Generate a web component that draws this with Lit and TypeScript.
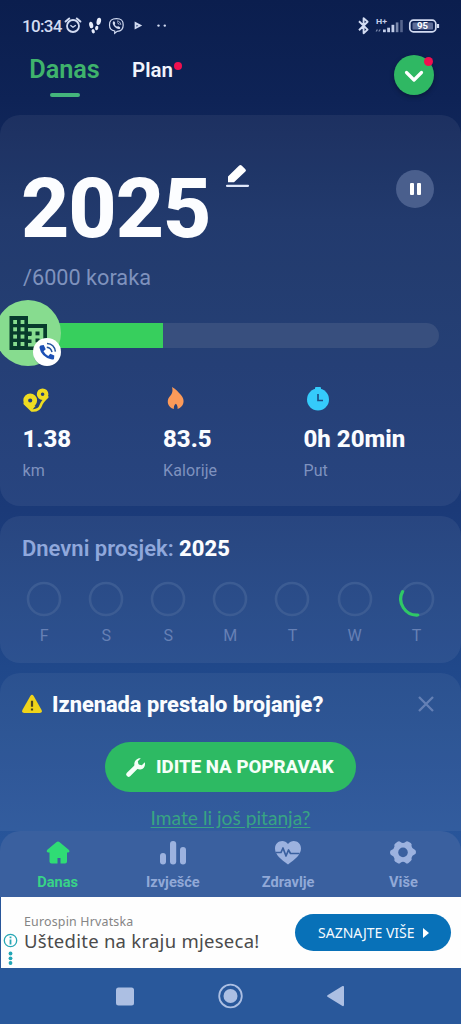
import { LitElement, html, css, svg } from "lit";
import { customElement } from "lit/decorators.js";

@customElement("status-bar")
class StatusBar extends LitElement {
  static styles = css`
    :host { display: block; height: 52px; color: #d3dcf2; }
    .row { display: flex; align-items: center; height: 52px; padding: 0 22px; }
    .time { font-size: 17px; line-height: 52px; width: 42px; white-space: nowrap; font-weight: 500; letter-spacing: -0.700px; }
    .left { width: 110px; height: 20px; }
    .right { width: 84px; height: 20px; margin-left: auto; margin-right: -2px; }
    svg { display: block; }
    .pct { font: 700 9px Roboto, sans-serif; }
    .net { font: 700 7px Roboto, sans-serif; }
  `;
  render() {
    return html`<div class="row">
      <div class="time">10:34</div>
      <svg class="left" viewBox="64 16 110 20" fill="none" stroke="#d3dcf2">
        <circle cx="73" cy="26" r="6" stroke-width="1.8" />
        <path d="M65.6 21.5l3.6-3M80.4 21.5l-3.6-3" stroke-width="2" stroke-linecap="round" />
        <path d="M70.4 25.2l2.6 2 2.8-2" stroke-width="1.4" />
        <g fill="#e8edfb" stroke="none">
          <ellipse cx="91.2" cy="25" rx="2" ry="3.4" transform="rotate(-12 91.2 25)" />
          <ellipse cx="93.2" cy="31.2" rx="1.6" ry="2.2" transform="rotate(-20 93.2 31.2)" />
          <ellipse cx="98.8" cy="21.4" rx="2.2" ry="3.7" transform="rotate(12 98.8 21.4)" />
          <ellipse cx="96.7" cy="28" rx="1.6" ry="2.2" transform="rotate(15 96.7 28)" />
        </g>
        <path d="M116.500 18.700c5 0 6.700 1.600 6.700 6.300 0 4.500-1.700 6.200-6 6.300l-2.500 2v-2.300c-3.600-.6-5.200-2.200-5.200-6 0-4.700 2-6.300 7-6.300z" stroke-width="1.2" />
        <path d="M113.500 21.300c-1.600 1.200-.4 4 1.400 5.800 1.800 1.700 4.400 2.800 5.300 1.100.5-1-1.900-2.600-2.600-1.800-.8.800-3.400-1.700-2.600-2.500.8-.7-.7-3.100-1.500-2.600z" fill="#d3dcf2" stroke="none" />
        <path d="M117 21c2.300.2 3.600 1.500 3.800 3.800M117.200 22.800c1.200.1 1.800.8 1.900 1.900" stroke-width=".9" />
        <path d="M134.600 21.600l7.600 4-7.600 4z" fill="#d3dcf2" stroke="none" />
        <path d="M136.400 24.700l2 1-2 1z" fill="#33457a" stroke="none" />
        <circle cx="158.500" cy="25.600" r="1.200" fill="#d3dcf2" stroke="none" />
        <circle cx="164.800" cy="25.600" r="1.200" fill="#d3dcf2" stroke="none" />
      </svg>
      <svg class="right" viewBox="355 16 84 20" fill="none" stroke="#d3dcf2">
        <path d="M357 21.200l8.600 8.400-4 3.600v-15l4 3.600-8.600 8.400" stroke-width="1.900" stroke-linejoin="round" />
        <g fill="#c3cee9" stroke="none">
          <text class="net" x="374" y="24" textLength="11" lengthAdjust="spacingAndGlyphs">H+</text>
          <path d="M374.500 29.500h1.500l-1 2h-1.400zM377.200 29.500h1.500l-1 2h-1.400z" opacity=".6" />
          <rect x="381" y="29.500" width="2.800" height="2.700" /><rect x="385.200" y="27.700" width="2.800" height="4.500" />
          <rect x="389.500" y="24.800" width="2.800" height="7.400" />
          <rect x="393.800" y="22.400" width="2.600" height="9.800" opacity=".6" />
          <rect x="398.200" y="20" width="2.600" height="12.200" opacity=".4" />
        </g>
        <rect x="407.800" y="20.200" width="26" height="11.600" rx="3.600" stroke-width="1.700" />
        <rect x="410.500" y="22.600" width="20.500" height="7" rx="1.200" fill="#5d6c97" stroke="none" />
        <path d="M436 24v4" stroke-width="2.200" />
        <text class="pct" x="415" y="29.300" fill="#fff" stroke="none" textLength="11" lengthAdjust="spacingAndGlyphs">95</text>
      </svg>
    </div>`;
  }
}

@customElement("top-tabs")
class TopTabs extends LitElement {
  static styles = css`
    :host { display: block; height: 63px; }
    .row { display: flex; align-items: flex-start; padding: 0 26px 0 29px; }
    .today { display: flex; flex-direction: column; align-items: center; width: 71px; color: #3fb36c; font-size: 25.300px; font-weight: 600; line-height: 36px; letter-spacing: -0.100px; }
    .bar { width: 30px; height: 4px; border-radius: 2px; background: #44b57c; margin-top: 5px; }
    .plan { margin-left: 32px; color: #f1f4fc; font-size: 20.500px; font-weight: 600; line-height: 36px; position: relative; }
    .dot { position: absolute; width: 8px; height: 8px; border-radius: 50%; background: #f0104f; left: 42px; top: 10px; }
    .round { margin-left: auto; margin-top: 3px; width: 40px; height: 40px; border-radius: 50%; background: #2fb863; position: relative; box-shadow: 0 2px 5px rgba(0, 0, 0, 0.300); margin-right: 1px; }
    .round svg { display: block; }
    .round .dot { left: 30px; top: 2px; width: 9px; height: 9px; }
  `;
  render() {
    return html`<div class="row">
      <div class="today"><span>Danas</span><div class="bar"></div></div>
      <div class="plan">Plan<span class="dot"></span></div>
      <div class="round">
        <svg width="40" height="40" viewBox="0 0 40 40"><path d="M12.500 17.500l7.500 7.500 7.500-7.500" fill="none" stroke="#fff" stroke-width="3.200" stroke-linecap="round" stroke-linejoin="round" /></svg>
        <span class="dot"></span>
      </div>
    </div>`;
  }
}

@customElement("steps-card")
class StepsCard extends LitElement {
  static styles = css`
    :host { display: block; height: 391px; border-radius: 20px; background: rgba(255, 255, 255, 0.060); }
    .inner { padding: 48px 0 0 23px; }
    .head { display: flex; height: 90px; }
    .steps { font-size: 84px; font-weight: 800; line-height: 92px; color: #fcfdff; margin-left: -2px; width: 193px; letter-spacing: -1.100px; }
    .edit { margin: 1px 0 0 12px; height: 25px; }
    .pause { margin: 7px 27px 0 auto; width: 38px; height: 38px; border-radius: 50%; background: #4a5f8d; display: flex; align-items: center; justify-content: center; gap: 3px; }
    .pause i { width: 4px; height: 12px; background: #fff; border-radius: 1px; }
    .goal { margin-top: 13px; font-size: 21.700px; line-height: 24px; color: #7f92bd; }
    .track { margin: 33px 22px 0 0; height: 25px; border-radius: 0 13px 13px 0; background: #384f7e; position: relative; }
    .fill { height: 25px; background: #37cf5d; }
    .chat { position: absolute; left: -28px; top: -23px; width: 72px; height: 70px; }
    .stats { display: grid; grid-template-columns: 140.500px 140.500px 1fr; margin-top: 37px; }
    .stats svg { display: block; height: 28px; }
    .val { margin-top: 12px; font-size: 24px; line-height: 28px; font-weight: 800; color: #fbfcff; white-space: nowrap; }
    .lab { margin-top: 8px; font-size: 16px; line-height: 20px; color: #7f92bf; letter-spacing: 0.100px; }
    .val, .lab { margin-left: -0.500px; }
  `;
  render() {
    const road = svg`<path d="M1.800 18.500L9 25.500q7 .5 9-5.500.8-3 6.200-8" fill="none" stroke="#efdc21" stroke-width="2.600" stroke-linecap="round" stroke-linejoin="round"/><g fill="none" stroke="#efdc21"><circle cx="7.200" cy="15.500" r="4.500" stroke-width="4.800"/><circle cx="19.600" cy="9.200" r="3.800" stroke-width="4"/></g><path d="M4 20.500l5.500 4 3-3.500z" fill="#efdc21"/>`;
    const flame = svg`<path d="M8 2c4 2 6.500 5.300 9 8 4.500 5.300 3 11.600-3.400 14 .2-2-.2-3.800-1.800-5.200-1.700 1.400-2.100 3.100-1.900 5.300-6.200-1.600-7.600-8-4.600-12 2.500-3 4-5.200 2.700-10.100z" fill="#fc9a59"/>`;
    const clock = svg`<circle cx="14" cy="14.500" r="11" fill="#35cbfb"/><rect x="11" y="2" width="6" height="3" rx="1" fill="#35cbfb"/><path d="M14 9v6.500h5" stroke="#1c4f86" stroke-width="1.700" fill="none"/>`;
    const data = [[road, "1.38", "km"], [flame, "83.5", "Kalorije"], [clock, "0h 20min", "Put"]];
    return html`<div class="inner">
      <div class="head">
        <div class="steps">2025</div>
        <svg class="edit" width="24" height="25" viewBox="0 0 24 25"><path d="M2 12.500L13.200 1.500q1.200-1.200 2.400 0l3.800 3.700q1.200 1.200 0 2.400L8 18.200H2z" fill="#fff" /><path d="M1 21.800h21" stroke="#dfe7fa" stroke-width="2.200" stroke-linecap="round" /></svg>
        <div class="pause"><i></i><i></i></div>
      </div>
      <div class="goal">/6000 koraka</div>
      <div class="track">
        <div class="fill" style="width:${(2025 / 6000) * 100}%"></div>
        <svg class="chat" viewBox="-5 300 72 70">
          <circle cx="28" cy="333" r="33" fill="#87dc8f" />
          <path d="M9.500 316H28v8h19v26H9.500z" fill="#073b2c" />
          <g fill="#87dc8f">
            ${[320, 327.3, 334.6, 342].map((y) => svg`<rect x="13.200" y=${y} width="3.800" height="4"/><rect x="20.600" y=${y} width="3.800" height="4"/>`)}
            <path d="M31.500 328h11.800v18.500H28v-3.500h3.500v-3.500H28V336h3.500v-3.500H28V328z" />
          </g>
          <g fill="#073b2c"><rect x="28" y="331.500" width="3.600" height="3.400" /><rect x="35.500" y="331.500" width="4" height="3.800" /><rect x="35.500" y="338.500" width="4" height="3.800" /></g>
          <circle cx="47.500" cy="353.500" r="14" fill="#203a66" opacity=".25" />
          <circle cx="47" cy="352" r="14" fill="#fff" />
          <path d="M40.500 345.500l3.200-.5 2 4.300-2.200 2q1.800 3.400 4.800 4.700l2-2.300 4 1.800-.3 3.400q-1 .8-3 .4-9.800-2.500-11.500-11.500-.2-1.500 1-2.300z" fill="#1d50b5" />
          <path d="M47 343.500c4.800.2 7.800 3.400 8.400 8.200M46.800 347.200c3 .4 4.700 2.200 5.200 5" stroke="#24549f" stroke-width="1.500" fill="none" />
        </svg>
      </div>
      <div class="stats">
        ${data.map((d) => html`<div><svg width="28" height="28" viewBox="0 0 28 28">${d[0]}</svg><div class="val">${d[1]}</div><div class="lab">${d[2]}</div></div>`)}
      </div>
    </div>`;
  }
}

@customElement("average-card")
class AverageCard extends LitElement {
  static styles = css`
    :host { display: block; height: 147px; border-radius: 20px; background: rgba(255, 255, 255, 0.060); margin-top: 10px; }
    .title { padding: 20px 0 0 22px; font-size: 22px; line-height: 26px; font-weight: 600; color: #90a8dc; }
    .title b { color: #fbfcff; font-weight: 800; }
    .days { display: grid; grid-template-columns: repeat(7, 62.100px); padding: 19px 0 0 13px; }
    .day { display: flex; flex-direction: column; align-items: center; font-size: 16px; line-height: 18px; color: #6680b5; gap: 10px; }
    svg { display: block; }
  `;
  render() {
    return html`<div class="title">Dnevni prosjek: <b>2025</b></div>
      <div class="days">
        ${["F", "S", "S", "M", "T", "W", "T"].map((d, i) => html`<div class="day">
          <svg width="36" height="36" viewBox="0 0 36 36" fill="none"><circle cx="18" cy="18" r="16" stroke="#3c5c93" stroke-width="2.600" />
            ${i === 6 ? svg`<path d="M18.800 34A16 16 0 0 1 3.600 10.600" stroke="#2fc866" stroke-width="3.200" stroke-linecap="round"/>` : null}</svg>
          <span>${d}</span></div>`)}
      </div>`;
  }
}

@customElement("repair-card")
class RepairCard extends LitElement {
  static styles = css`
    :host { display: block; height: 158px; border-radius: 20px 20px 0 0; background: rgba(255, 255, 255, 0.050); margin-top: 10px; }
    .head { display: flex; align-items: center; padding: 18px 26px 0 22px; height: 26px; }
    .head span { margin-left: 10px; font-size: 21.800px; line-height: 28px; padding-top: 1px; font-weight: 800; color: #fafcff; white-space: nowrap; }
    .close { margin-left: auto; }
    .btn { margin: 25px 0 0 105px; width: 251px; height: 50px; border-radius: 25px; background: #2dba63; color: #f5fff8; display: flex; align-items: center; font-size: 18.700px; line-height: 52px; font-weight: 800; white-space: nowrap; }
    .btn svg { margin: 0 10px 0 20px; }
    .link { margin-top: 14px; text-align: center; font: 19.200px/24px Lato, sans-serif; color: #38a483; text-decoration: underline; text-underline-offset: 2px; }
  `;
  render() {
    return html`<div class="head">
        <svg width="20" height="20" viewBox="0 0 20 20"><path d="M8.300 2q1.700-2.600 3.400 0L19.600 16q1 2.800-1.800 3H2.200Q-.600 18.800.400 16z" fill="#f0d419" /><path d="M10 6.800v6M10 14.500v2" stroke="#4c4420" stroke-width="2.200" /></svg>
        <span>Iznenada prestalo brojanje?</span>
        <svg class="close" width="18" height="18" viewBox="0 0 18 18"><path d="M2 2l14 14M16 2L2 16" stroke="#6480b5" stroke-width="2.300" /></svg>
      </div>
      <div class="btn"><svg width="21" height="21" viewBox="0 0 21 21"><path d="M3.500 17.500L12 9.200" stroke="#f5fff8" stroke-width="4.600" stroke-linecap="round" /><path d="M15.800 1.200l-3 3 .7 3.200 3.300.8 3-3c.9 3.300-.8 6.900-4.500 7.300-3.200.3-6-2-6-5.400 0-3.600 3.200-6.400 6.500-5.900z" fill="#f5fff8" /></svg>IDITE NA POPRAVAK</div>
      <div class="link">Imate li još pitanja?</div>`;
  }
}

@customElement("bottom-nav")
class BottomNav extends LitElement {
  static styles = css`
    :host { display: block; height: 66px; border-radius: 20px 20px 0 0; background: #3a609f; }
    .row { display: grid; grid-template-columns: repeat(4, 1fr); }
    .item { display: flex; flex-direction: column; align-items: center; padding-top: 9px; gap: 6px; color: #91a9d7; fill: #9cb2df; font-size: 14.600px; font-weight: 700; line-height: 18px; }
    .on { color: #38d487; fill: #2fdc75; }
    svg { display: block; }
  `;
  render() {
    const icons = [
      svg`<path d="M12.300 2.200q1.700-1.500 3.400 0l9 7.600q1.800 2-.5 2.700h-1.200v9q0 2-2 2h-4.500v-5.500h-3v5.500H7.500q-2 0-2-2v-9H4q-2.200-.8-.7-2.700z"/>`,
      svg`<rect x="1" y="13" width="6" height="11.500" rx="3"/><rect x="11" y="1" width="6.200" height="23.500" rx="3"/><rect x="21" y="7" width="6" height="17.500" rx="3"/>`,
      svg`<path d="M14 24.500C7 19.500 1 14.500 1 8.500 1 1 10 -1.500 14 4c4-5.500 13-3 13 4.500 0 6-6 11-13 16z"/><path d="M2 12.500h5l2-4.500 3 8 2.500-6 2 3.500h9" fill="none" stroke="#3a609f" stroke-width="1.700" stroke-linejoin="round"/>`,
      svg`<path d="M8.500 1.800q1.700-1.300 3 .3 2.500 1.800 5 0 1.300-1.600 3-.3l2.200 1.200q1.500 1 .8 3 .5 3 3 3.500 1.500.5 1.500 2.500t-1.500 2.500q-2.500.8-3 3.500.8 2-.8 3L19.500 23q-1.700 1.300-3-.3-2.500-1.800-5 0-1.300 1.600-3 .3l-2.200-1.200q-1.500-1-.8-3-.5-3-3-3.500Q1 14.500 1 12.400t1.500-2.500q2.500-.8 3-3.500-.8-2 .8-3z"/><circle cx="14" cy="12.400" r="4.800" fill="#3a609f"/>`,
    ];
    return html`<div class="row">${["Danas", "Izvješće", "Zdravlje", "Više"].map((t, i) => html`<div class="item ${i ? "" : "on"}"><svg width="28" height="27" viewBox="0 0 28 27">${icons[i]}</svg><span>${t}</span></div>`)}</div>`;
  }
}

@customElement("ad-banner")
class AdBanner extends LitElement {
  static styles = css`
    :host { display: block; height: 71px; background: #fefefe; font-family: "Noto Sans", sans-serif; margin-left: 1px; }
    .row { display: flex; height: 71px; }
    .info { width: 20px; margin-left: 1px; padding-top: 35px; }
    .text { flex: 1; padding: 16px 0 0 2px; white-space: nowrap; }
    .brand { font-size: 12.400px; line-height: 18px; color: #858585; letter-spacing: 0.200px; }
    .msg { font-size: 18.500px; line-height: 20px; color: #4b4b4b; letter-spacing: 0.260px; }
    .cta { margin: 17px 10px 0 0; width: 156px; height: 37px; border-radius: 19px; background: #0871b8; color: #f6fbff; font-size: 14px; line-height: 36px; display: flex; align-items: center; box-sizing: border-box; padding-left: 23px; gap: 8px; white-space: nowrap; }
    svg { display: block; }
  `;
  render() {
    return html`<div class="row">
      <svg class="info" width="20" height="36" viewBox="0 0 20 36"><circle cx="8.500" cy="8.500" r="6.200" fill="#fff" stroke="#27a7b5" stroke-width="1.300" /><path d="M8.500 7.500v5M8.500 4.500v1.700" stroke="#27a7b5" stroke-width="1.800" /><g fill="#20a5b5"><circle cx="8.500" cy="21.500" r="1.900" /><circle cx="8.500" cy="26.300" r="1.900" /><circle cx="8.500" cy="31" r="1.900" /></g></svg>
      <div class="text"><div class="brand">Eurospin Hrvatska</div><div class="msg">Uštedite na kraju mjeseca!</div></div>
      <div class="cta"><span>SAZNAJTE VIŠE</span><svg width="6" height="10" viewBox="0 0 6 10"><path d="M0 0l6 5-6 5z" fill="#fff" /></svg></div>
    </div>`;
  }
}

@customElement("system-nav")
class SystemNav extends LitElement {
  static styles = css`
    :host { display: block; height: 56px; background: #29589b; }
    svg { display: block; }
  `;
  render() {
    return html`<svg width="461" height="56" viewBox="0 0 461 56" fill="#acbfe3">
      <rect x="116" y="19.500" width="18" height="18" rx="2.500" />
      <circle cx="230.500" cy="28" r="11.300" fill="none" stroke="#acbfe3" stroke-width="1.800" /><circle cx="230.500" cy="28" r="7" />
      <path d="M327.500 27.200q-1 .8 0 1.600L342.500 38q1.500.5 1.500-1V19q0-1.500-1.500-1z" />
    </svg>`;
  }
}

@customElement("app-root")
class AppRoot extends LitElement {
  static styles = css`
    :host { display: block; width: 461px; height: 1024px; overflow: hidden; font-family: Roboto, sans-serif; }
    .screen { display: flex; flex-direction: column; height: 1024px; background: linear-gradient(#0b1e4e 0, #0e2356 100px, #152e64 220px, #1b3a78 510px, #20488a 668px, #28559a 840px, #29589b 1024px); }
  `;
  render() {
    return html`<div class="screen">
      <status-bar></status-bar>
      <top-tabs></top-tabs>
      <steps-card></steps-card>
      <average-card></average-card>
      <repair-card></repair-card>
      <bottom-nav></bottom-nav>
      <ad-banner></ad-banner>
      <system-nav></system-nav>
    </div>`;
  }
}
